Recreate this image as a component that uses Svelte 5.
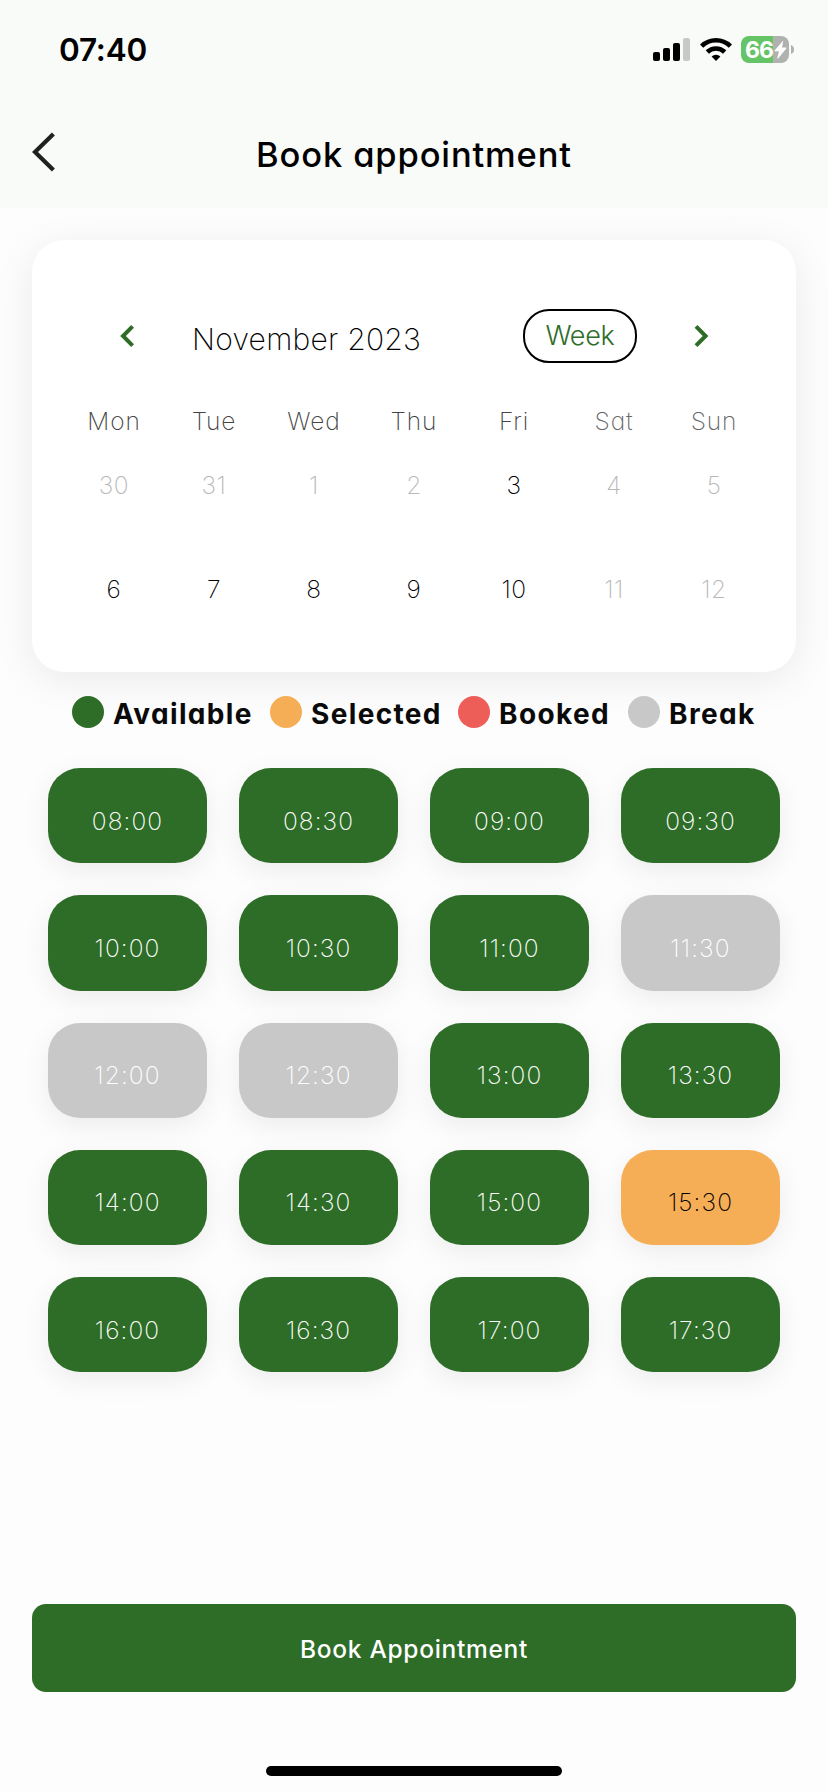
<script>
  const weekdays = ['Mon', 'Tue', 'Wed', 'Thu', 'Fri', 'Sat', 'Sun'];
  const days = [
    [30, 0], [31, 0], [1, 0], [2, 0], [3, 1], [4, 0], [5, 0],
    [6, 1], [7, 1], [8, 1], [9, 1], [10, 1], [11, 0], [12, 0]
  ];
  const legend = [
    ['Available', 'available'],
    ['Selected', 'selected'],
    ['Booked', 'booked'],
    ['Break', 'break']
  ];
  const times = Array.from({ length: 20 }, (_, i) => {
    const hour = String(8 + Math.floor(i / 2)).padStart(2, '0');
    return `${hour}:${i % 2 ? '30' : '00'}`;
  });
  const breaks = ['11:30', '12:00', '12:30'];
  let selected = $state('15:30');
  const status = (t) => (breaks.includes(t) ? 'break' : t === selected ? 'selected' : 'available');
</script>

<div class="screen">
  <header>
    <div class="statusbar">
      <span class="clock">07:40</span>
      <div class="indicators">
        <svg class="signal" width="37" height="23" viewBox="0 0 37 23">
          <rect x="0" y="14" width="7" height="9" rx="2" />
          <rect x="10" y="10" width="7" height="13" rx="2" />
          <rect x="20" y="5" width="7" height="18" rx="2" />
          <rect x="30" y="0" width="7" height="23" rx="2" fill="#c7c9c7" />
        </svg>
        <svg class="wifi" width="32" height="24" viewBox="0 0 32 24">
          <g fill="none" stroke="#000" stroke-width="4.6">
            <path d="M1.6 9.1a20.6 20.6 0 0 1 28.8 0" />
            <path d="M7.3 15a12.4 12.4 0 0 1 17.4 0" />
          </g>
          <path d="M16 24l-4.4-4.5a6.3 6.3 0 0 1 8.8 0z" />
        </svg>
        <div class="battery">
          <span>66</span>
          <svg width="13" height="19" viewBox="0 0 13 19">
            <path d="M9.3.5L.6 10.5q-.4.8.4.8h4L3.3 18.2q.2.8.8.2l8.2-10q.5-.9-.3-.9H8z" fill="#fff" />
          </svg>
        </div>
        <svg class="nub" width="3" height="9" viewBox="0 0 3 9"><path d="M0 0q3 1 3 4.5T0 9z" fill="#b0b2b0" /></svg>
      </div>
    </div>
    <div class="titlebar">
      <svg class="back" width="24" height="40" viewBox="0 0 24 40">
        <path d="M21.4 2L3 20l18.4 18" fill="none" stroke="#202020" stroke-width="4.2" />
      </svg>
      <h1>Book appointment</h1>
    </div>
  </header>

  <section class="calendar">
    <div class="month">
      <svg class="prev" width="16" height="24" viewBox="0 0 16 24">
        <path d="M12.6 2.3L3 12l9.6 9.7" fill="none" stroke="#2e6d28" stroke-width="4" />
      </svg>
      <h2>November 2023</h2>
      <button class="mode">Week</button>
      <svg class="next" width="16" height="24" viewBox="0 0 16 24">
        <path d="M3 2.3l9.6 9.7L3 21.7" fill="none" stroke="#2e6d28" stroke-width="4" />
      </svg>
    </div>
    <div class="weekdays">
      {#each weekdays as d, i}<span class:weekend={i > 4}>{d}</span>{/each}
    </div>
    <div class="days">
      {#each days as [n, on]}<span class:on={on}>{n}</span>{/each}
    </div>
  </section>

  <div class="legend">
    {#each legend as [label, kind]}
      <div class="key"><i class={kind}></i><b>{label}</b></div>
    {/each}
  </div>

  <div class="slots">
    {#each times as t}
      <button class="slot {status(t)}" disabled={breaks.includes(t)} onclick={() => (selected = t)}>{t}</button>
    {/each}
  </div>

  <footer>
    <button class="book">Book Appointment</button>
    <div class="home"></div>
  </footer>
</div>

<style>
  :global(body) { margin: 0; }
  .screen {
    box-sizing: border-box;
    width: 828px;
    height: 1792px;
    display: flex;
    flex-direction: column;
    overflow: hidden;
    background: #fdfdfd;
    color: #000;
    font-family: Inter, 'Open Sans', sans-serif;
    font-feature-settings: 'cv11' 1;
  }
  button { border: 0; margin: 0; padding: 0; font: inherit; font-feature-settings: inherit; letter-spacing: inherit; }
  h1, h2 { margin: 0; }
  header { height: 208px; flex: none; background: #f9fbf8; }
  .statusbar {
    display: flex;
    justify-content: space-between;
    height: 100px;
    padding: 0 34px 0 59px;
  }
  .clock { font-size: 31.5px; font-weight: 600; line-height: 100px; letter-spacing: -0.2px; }
  .indicators { display: flex; align-items: flex-start; padding-top: 36px; }
  .signal { margin-top: 2px; }
  .wifi { margin: 1px 9px 0 10px; }
  .battery {
    display: flex;
    align-items: center;
    width: 48px;
    height: 27px;
    box-sizing: border-box;
    padding-left: 4px;
    border-radius: 8px;
    background: linear-gradient(90deg, #65c466 32px, #b0b2b0 32px);
    color: #fff;
    font-size: 23px;
    font-weight: 700;
    letter-spacing: -1px;
  }
  .battery span { width: 29px; }
  .battery svg { flex: none; }
  .nub { margin: 9px 0 0 2px; }
  .titlebar { display: grid; grid-template-columns: 60px 1fr 60px; padding: 0 30px; height: 108px; }
  .back { margin: 32px 0 0 2px; }
  h1 { text-align: center; font-size: 34.5px; font-weight: 550; line-height: 109px; letter-spacing: 0.85px; white-space: nowrap; }
  .calendar {
    box-sizing: border-box;
    flex: none;
    height: 432px;
    margin: 32px 32px 0;
    padding: 69px 32px 0;
    border-radius: 32px;
    background: #fff;
    box-shadow: 0 8px 40px rgba(0, 0, 0, 0.08);
  }
  .month { display: flex; align-items: center; height: 54px; padding: 0 55px 0 56px; }
  h2 { flex: none; margin: 6px 0 0 56px; width: 271px; font-size: 30px; font-weight: 250; letter-spacing: 0.25px; white-space: nowrap; }
  .prev, .next { flex: none; }
  .mode {
    width: 114px;
    height: 54px;
    margin: 0 56px 0 auto;
    padding-bottom: 2px;
    border: 2px solid #000;
    border-radius: 26px;
    background: #fff;
    color: #2e6d28;
    font-size: 27px;
    font-weight: 350;
    letter-spacing: -0.3px;
  }
  .weekdays, .days { display: grid; grid-template-columns: repeat(7, 100px); text-align: center; }
  .weekdays { margin-top: 42px; line-height: 32px; font-size: 24.5px; font-weight: 250; letter-spacing: 0.9px; color: #444; }
  .weekdays .weekend { color: #666; }
  .days { margin-top: 32px; grid-auto-rows: 104px; line-height: 32px; font-size: 24.5px; font-weight: 250; letter-spacing: 0.5px; color: #b8b8b8; }
  .days .on { color: #000; }
  .legend {
    display: grid;
    grid-template-columns: 198px 188px 170px auto;
    grid-template-rows: 32px;
    height: 32px;
    margin: 24px 0 0 72px;
  }
  .key { display: flex; align-items: center; gap: 9px; }
  .key i { flex: none; width: 32px; height: 32px; border-radius: 50%; }
  .key b { padding-top: 4px; font-size: 28px; font-weight: 700; letter-spacing: 1.35px; color: #0a0a0a; line-height: 28px; }
  .slots {
    display: grid;
    grid-template-columns: repeat(4, 159px);
    grid-auto-rows: 95.25px;
    gap: 32px;
    margin: 40px 48px 0;
  }
  .slot {
    padding-top: 10px;
    border-radius: 32px;
    box-shadow: 0 8px 28px rgba(0, 0, 0, 0.07);
    color: #fff;
    font-size: 24.5px;
    font-weight: 250;
    letter-spacing: 1.1px;
  }
  .available { background: #2e6d28; }
  .selected { background: #f5ae56; }
  .slot.selected { color: #000; }
  .booked { background: #ee5e59; }
  .break { background: #c8c8c8; }
  footer { margin-top: auto; display: flex; flex-direction: column; align-items: center; padding-bottom: 16px; }
  .book {
    width: 764px;
    height: 88px;
    border-radius: 14px;
    background: #2e6d28;
    color: #fff;
    font-size: 24.5px;
    font-weight: 500;
    letter-spacing: 0.7px;
    padding-top: 1px;
  }
  .home { width: 296px; height: 10px; margin-top: 74px; border-radius: 5px; background: #000; }
</style>
